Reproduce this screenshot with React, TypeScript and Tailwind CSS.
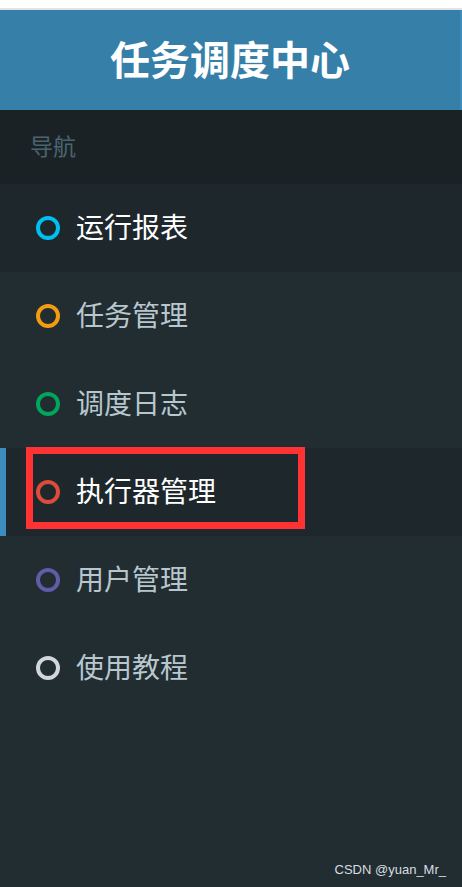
import React from "react";

const items = [
  { label: "运行报表", color: "#00c0ef", active: true, bar: false },
  { label: "任务管理", color: "#f39c12", active: false, bar: false },
  { label: "调度日志", color: "#00a65a", active: false, bar: false },
  { label: "执行器管理", color: "#dd4b39", active: true, bar: true },
  { label: "用户管理", color: "#605ca8", active: false, bar: false },
  { label: "使用教程", color: "#d2d6de", active: false, bar: false },
];

export default function App() {
  return (
    <div
      className="w-[462px] h-[887px] flex flex-col bg-[#222d32] overflow-hidden"
      style={{ fontFamily: '"Noto Sans CJK SC", "Noto Sans", sans-serif' }}
    >
      <div className="h-[8px] bg-white shrink-0" />
      <div className="h-[2px] bg-[#e3e3e3] shrink-0" />
      <div className="h-[100px] shrink-0 flex bg-[#367fa9]">
        <div className="flex-1 flex items-center justify-center pb-[5px]">
          <span className="text-white font-bold text-[40px] leading-none">任务调度中心</span>
        </div>
        <div className="w-[2px] bg-[#3c8dbc]" />
      </div>
      <div className="h-[74px] shrink-0 bg-[#1a2226] flex items-center pl-[30px] pb-[4px]">
        <span className="text-[#4b646f] text-[23px] leading-none">导航</span>
      </div>
      {items.map((it) => (
        <div
          key={it.label}
          className={`h-[88px] shrink-0 flex items-center relative ${it.active ? "bg-[#1e282c]" : "bg-[#222d32]"}`}
        >
          {it.bar && <div className="absolute left-0 top-0 bottom-0 w-[6px] bg-[#3c8dbc]" />}
          <div className="pl-[36px] flex items-center gap-[16px]">
            <div
              className="w-[24px] h-[24px] rounded-full border-4"
              style={{ borderColor: it.color }}
            />
            <span className={`text-[28px] leading-none pb-[4px] ${it.active ? "text-white" : "text-[#b8c7ce]"}`}>
              {it.label}
            </span>
          </div>
          {it.bar && (
            <div className="absolute left-[26px] top-[-1px] w-[279px] h-[82px] border-[7px] border-[#ff3333]" />
          )}
        </div>
      ))}
      <div className="flex-1 flex items-end justify-end pr-[16px] pb-[11px]">
        <span
          className="text-[#d8dde0] text-[13px] leading-none"
          style={{ fontFamily: '"Liberation Sans", Arial, sans-serif' }}
        >
          CSDN @yuan_Mr_
        </span>
      </div>
    </div>
  );
}
